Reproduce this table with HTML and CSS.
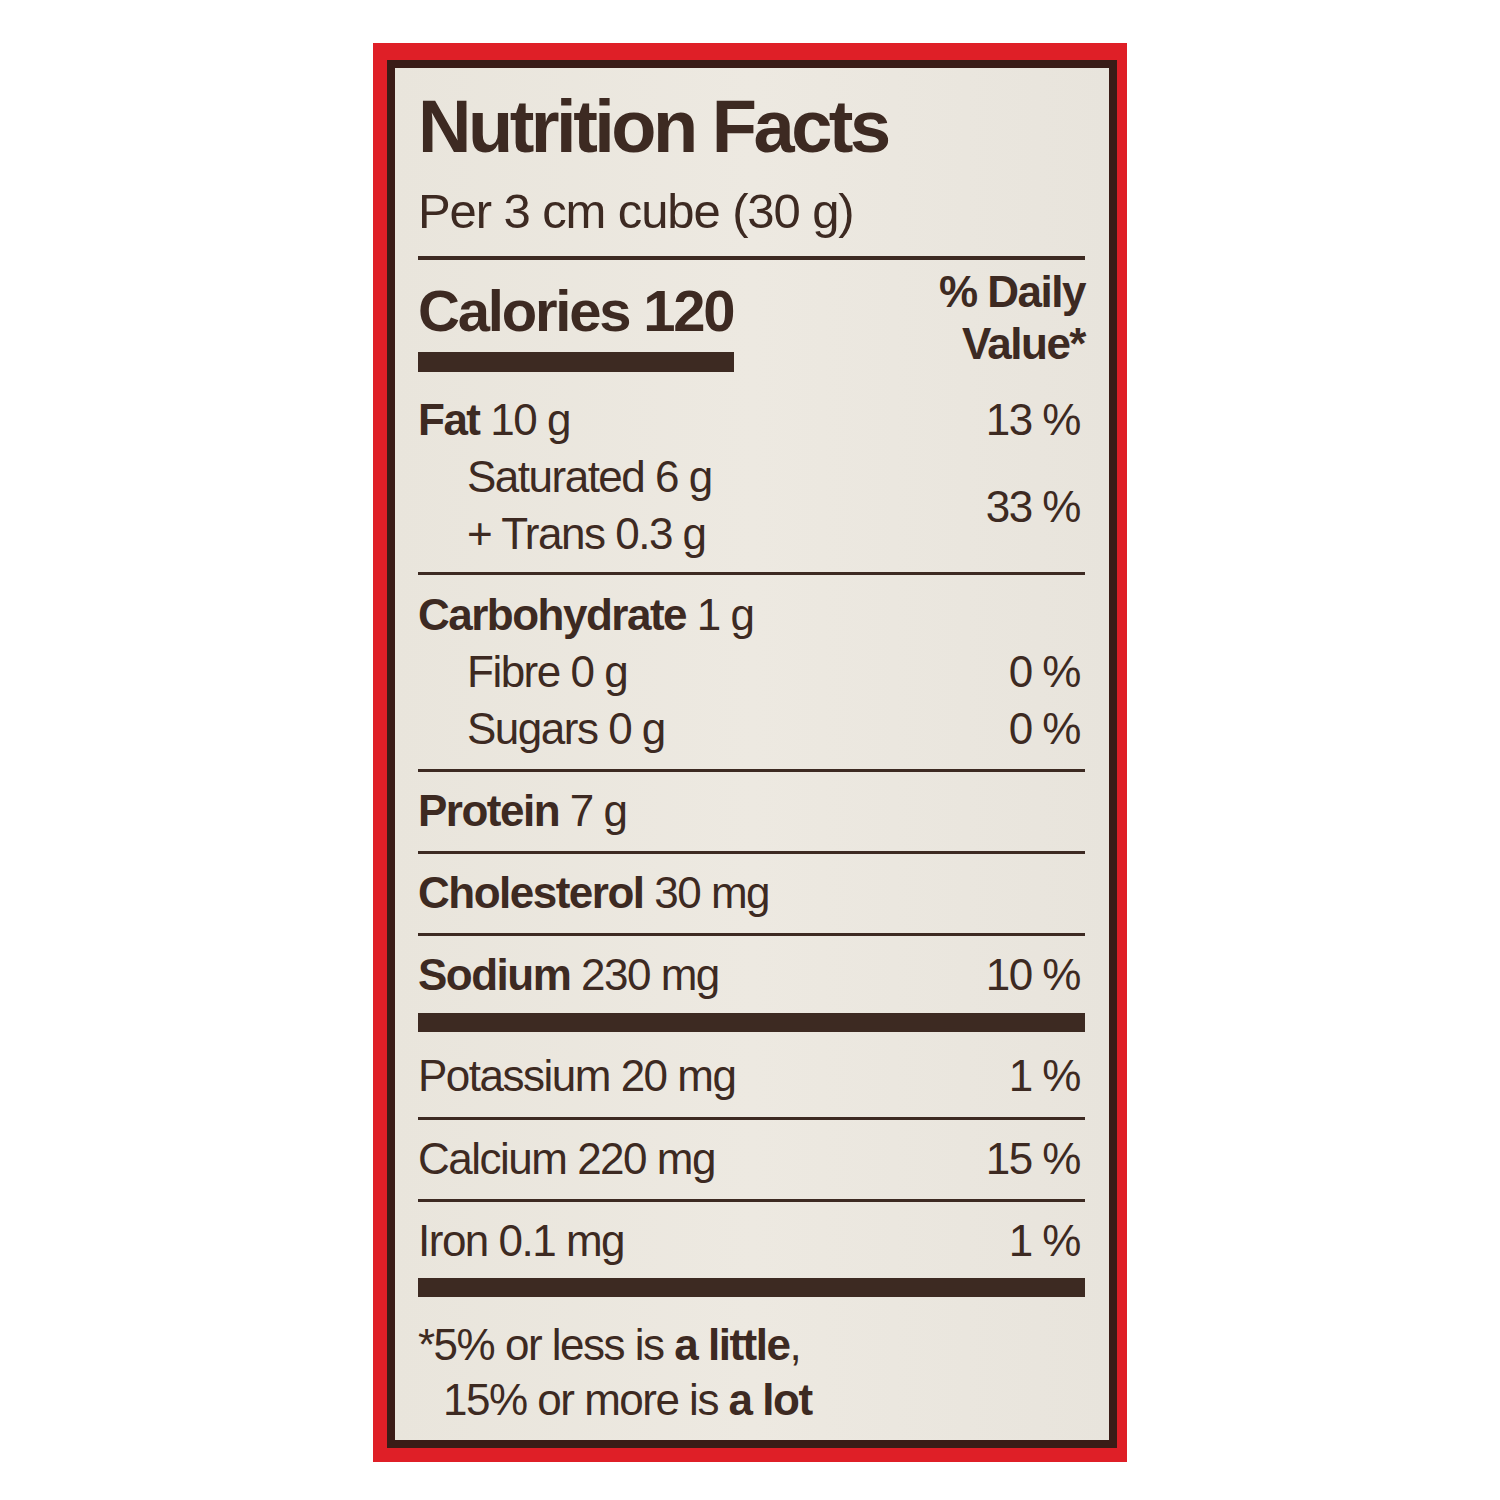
FILE: index.html
```html
<!DOCTYPE html>
<html lang="en">
<head>
<meta charset="utf-8">
<title>Nutrition Facts</title>
<link rel="stylesheet" href="styles.css">
</head>
<body>
<div class="pack">
  <div class="label">
    <h1 class="title">Nutrition Facts</h1>
    <div class="serving">Per 3 cm cube (30 g)</div>
    <div class="rule-med"></div>
    <div class="cal-section">
      <div class="cal-left">
        <div class="calories">Calories 120</div>
        <div class="cal-bar"></div>
      </div>
      <div class="dv-head">% Daily<br>Value*</div>
    </div>

    <div class="group group-fat">
      <div class="row"><span><b>Fat</b> 10 g</span><span class="pct">13 %</span></div>
      <div class="sub-pair">
        <div class="sub-lines">
          <div class="row sub">Saturated 6 g</div>
          <div class="row sub">+ Trans 0.3 g</div>
        </div>
        <span class="pct">33 %</span>
      </div>
    </div>
    <div class="rule"></div>

    <div class="group group-carb">
      <div class="row"><span><b>Carbohydrate</b> 1 g</span></div>
      <div class="row sub"><span>Fibre 0 g</span><span class="pct">0 %</span></div>
      <div class="row sub"><span>Sugars 0 g</span><span class="pct">0 %</span></div>
    </div>
    <div class="rule"></div>

    <div class="group single">
      <div class="row"><span><b>Protein</b> 7 g</span></div>
    </div>
    <div class="rule"></div>

    <div class="group single">
      <div class="row"><span><b>Cholesterol</b> 30 mg</span></div>
    </div>
    <div class="rule"></div>

    <div class="group single sodium">
      <div class="row"><span><b>Sodium</b> 230 mg</span><span class="pct">10 %</span></div>
    </div>
    <div class="rule-thick"></div>

    <div class="group single potassium">
      <div class="row"><span>Potassium 20 mg</span><span class="pct">1 %</span></div>
    </div>
    <div class="rule"></div>

    <div class="group single">
      <div class="row"><span>Calcium 220 mg</span><span class="pct">15 %</span></div>
    </div>
    <div class="rule"></div>

    <div class="group single iron">
      <div class="row"><span>Iron 0.1 mg</span><span class="pct">1 %</span></div>
    </div>
    <div class="rule-thick"></div>

    <div class="footnote">
      <div class="fn-line">*5% or less is <b>a little</b>,</div>
      <div class="fn-line fn-indent">15% or more is <b>a lot</b></div>
    </div>
  </div>
</div>
</body>
</html>
```

FILE: styles.css
```css
html, body {
  margin: 0;
  padding: 0;
  background: #ffffff;
}

body {
  font-family: "Liberation Sans", Arial, sans-serif;
  color: #3d2a22;
}

.pack {
  box-sizing: border-box;
  width: 754px;
  height: 1419px;
  margin: 43px 0 0 373px;
  padding: 17px 10px 14px 14px;
  background: #df1f27;
}

.label {
  box-sizing: border-box;
  height: 100%;
  border: 8px solid #3a1c17;
  background: linear-gradient(90deg, #e9e5dc 0%, #ede9e1 50%, #e8e4dc 100%);
  padding: 22px 24px 0 23px;
}

.title {
  margin: 0;
  font-weight: 700;
  font-size: 74px;
  line-height: 74px;
  letter-spacing: -3.5px;
  white-space: nowrap;
}

.serving {
  margin-top: 23px;
  font-size: 49px;
  line-height: 49px;
  letter-spacing: -1.1px;
}

.rule-med {
  margin-top: 20px;
  height: 4px;
  background: #3d2a22;
}

.cal-section {
  display: flex;
  justify-content: space-between;
  align-items: flex-start;
}

.cal-left {
  padding-top: 19px;
  width: 316px;
}

.calories {
  font-weight: 700;
  font-size: 58px;
  line-height: 63px;
  letter-spacing: -2.2px;
  white-space: nowrap;
}

.cal-bar {
  margin-top: 10px;
  height: 20px;
  background: #3d2a22;
}

.dv-head {
  padding-top: 6px;
  text-align: right;
  font-weight: 700;
  font-size: 44px;
  line-height: 52px;
  letter-spacing: -1.5px;
}

.group {
  padding: 11px 0 12px;
}

.group-fat {
  padding: 19px 0 10px;
}

.group-carb {
  padding: 11px 0 12px;
}

.sodium {
  padding-bottom: 10px;
}

.potassium {
  padding-top: 16px;
  padding-bottom: 13px;
}

.iron {
  padding-bottom: 9px;
}

.row {
  display: flex;
  justify-content: space-between;
  align-items: baseline;
  font-size: 44px;
  line-height: 57px;
  letter-spacing: -1.5px;
  white-space: nowrap;
}

.single .row {
  line-height: 56px;
}

.row b {
  font-weight: 700;
}

.sub {
  padding-left: 49px;
}

.sub-pair {
  display: flex;
  justify-content: space-between;
  align-items: center;
}

.sub-pair .pct {
  font-size: 44px;
  letter-spacing: -1.5px;
  padding-top: 4px;
}

.pct {
  padding-right: 5px;
}

.rule {
  height: 3px;
  background: #3d2a22;
}

.rule-thick {
  height: 19px;
  background: #3d2a22;
}

.footnote {
  padding-top: 20px;
}

.fn-line {
  font-size: 44px;
  line-height: 55px;
  letter-spacing: -1.5px;
  white-space: nowrap;
}

.fn-line b {
  font-weight: 700;
}

.fn-indent {
  padding-left: 25px;
}
```
